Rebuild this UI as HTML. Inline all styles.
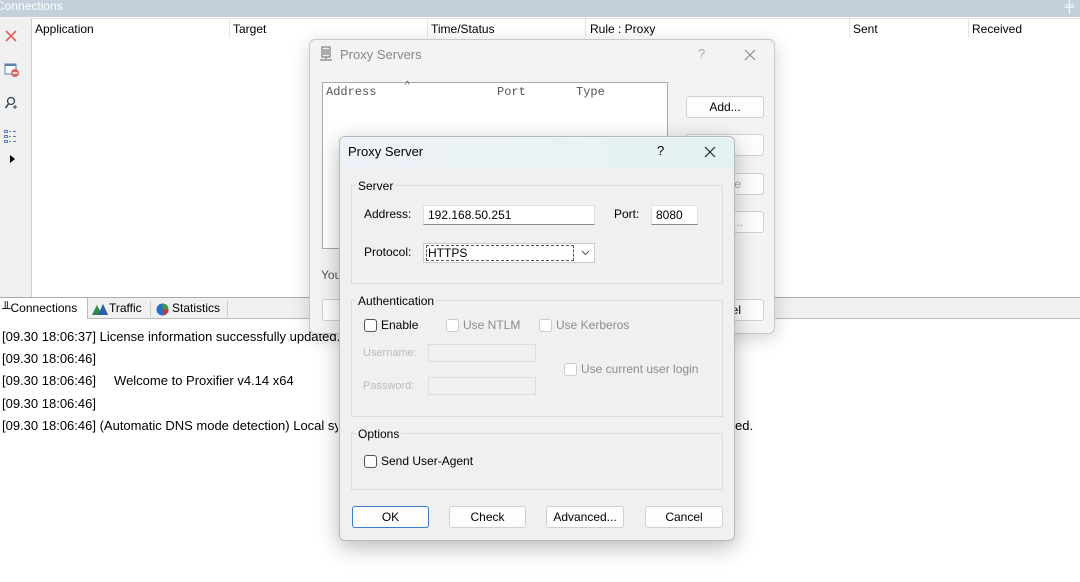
<!DOCTYPE html>
<html><head><meta charset="utf-8"><style>
*{box-sizing:border-box;margin:0;padding:0}
body{width:1080px;height:582px;overflow:hidden;background:#fff;font-family:"Segoe UI","Liberation Sans",sans-serif;font-size:12px;color:#000;position:relative}
.a{position:absolute}
.tb{left:0;top:0;width:1080px;height:17px;background:#c3d0dc;color:#fff;font-size:12px;line-height:12px;padding-left:0}
.lt{left:0;top:17px;width:31px;height:280px;background:#f0f0f0}
.grid{left:31px;top:18px;width:1049px;height:279px;background:#fff;border-left:1px solid #ccc;border-top:1px solid #ddd}
.hd{top:22px;font-size:12px}
.sep{top:19px;width:1px;height:19px;background:#e5e5e5}
.tabs{left:0;top:297px;width:1080px;height:22px;background:#f0f0f0;border-top:1px solid #aaa;border-bottom:1px solid #bbb}
.log{font-size:13px;left:2px;white-space:nowrap}
.dlg1{left:309px;top:39px;width:466px;height:295px;background:#f3f3f3;border:1px solid #c8c8c8;border-radius:6px;box-shadow:0 4px 18px rgba(0,0,0,.18)}
.dlg2{left:339px;top:136px;width:396px;height:405px;background:#f0f0f0;border:1px solid #b8b8b8;border-radius:6px;box-shadow:0 6px 22px rgba(0,0,0,.28);overflow:hidden}
.t2{left:0;top:0;width:100%;height:31px;background:linear-gradient(90deg,#eef2f8,#e4f3f1)}
.grp{border:1px solid #dcdcdc;}
.gl{background:#f0f0f0;padding:0 2px;font-size:12px}
.inp{background:#fff;border:1px solid #e2e2e2;border-bottom:1px solid #888;height:20px;font-size:12px;padding:2px 4px}
.cb{width:13px;height:13px;border:1px solid #555;border-radius:3px;background:#fff}
.cbd{border-color:#ccc}
.dis{color:#8c8c8c}
.btn{height:22px;background:#fdfdfd;border:1px solid #d0d0d0;border-radius:3px;text-align:center;line-height:20px;font-size:12px}
</style></head><body>
<div class="a tb"><span style="position:absolute;left:-4px;top:0">Connections</span><span style="position:absolute;right:6px;top:0;font-size:13px">╪</span></div>
<div class="a lt">
<svg class="a" style="left:4px;top:12px" width="14" height="14"><path d="M2 2L12 12M12 2L2 12" stroke="#e06060" stroke-width="1.6"/></svg>
<svg class="a" style="left:4px;top:45px" width="16" height="16"><rect x="1" y="2" width="11" height="10" fill="#fff" stroke="#5a7fb0"/><rect x="1" y="2" width="11" height="2" fill="#5a7fb0"/><circle cx="11" cy="11" r="4" fill="#e06060"/><rect x="8.5" y="10.3" width="5" height="1.5" fill="#fff"/></svg>
<svg class="a" style="left:4px;top:79px" width="14" height="14"><circle cx="7" cy="5" r="3.5" fill="none" stroke="#345" stroke-width="1.3"/><path d="M4.5 8L1.5 12" stroke="#345" stroke-width="1.5"/><path d="M9 11h4M11 9v4" stroke="#345"/></svg>
<svg class="a" style="left:3px;top:112px" width="16" height="16"><g fill="none" stroke="#5a7fb0"><rect x="1.5" y="1.5" width="3" height="2"/><rect x="1.5" y="6.5" width="3" height="2"/><rect x="1.5" y="11.5" width="3" height="2"/></g><path d="M6 2.5h2M10 2.5h3M6 7.5h2M10 7.5h3M6 12.5h2M10 12.5h3" stroke="#5a7fb0"/></svg>
<svg class="a" style="left:9px;top:137px" width="8" height="10"><path d="M1 1L6 5L1 9Z" fill="#000"/></svg>
</div>
<div class="a grid"></div>
<div class="a hd" style="left:35px">Application</div><div class="a sep" style="left:229px"></div>
<div class="a hd" style="left:233px">Target</div><div class="a sep" style="left:427px"></div>
<div class="a hd" style="left:431px">Time/Status</div><div class="a sep" style="left:585px"></div>
<div class="a hd" style="left:590px">Rule : Proxy</div><div class="a sep" style="left:849px"></div>
<div class="a hd" style="left:853px">Sent</div><div class="a sep" style="left:968px"></div>
<div class="a hd" style="left:972px">Received</div>
<div class="a tabs">
<div class="a" style="left:0;top:0;width:88px;height:21px;background:#fff;border-right:1px solid #bbb"></div>
<div class="a" style="left:2px;top:3px">╨Connections</div>
<svg class="a" style="left:92px;top:5px" width="16" height="12"><path d="M0 12L5 2L8 8L11 1L16 12Z" fill="#2a8a4a"/><path d="M6 12L11 1L16 12Z" fill="#2b5fa8"/></svg>
<div class="a" style="left:109px;top:3px">Traffic</div><div class="a" style="left:150px;top:3px;width:1px;height:16px;background:#ccc"></div>
<svg class="a" style="left:156px;top:5px" width="13" height="13"><circle cx="6.5" cy="6.5" r="6" fill="#2b6cc4"/><path d="M6.5 6.5V0.5A6 6 0 0 1 12.5 6.5Z" fill="#3a9a3a"/><path d="M6.5 6.5H12.5A6 6 0 0 1 8 12.3Z" fill="#c33"/></svg>
<div class="a" style="left:172px;top:3px">Statistics</div><div class="a" style="left:227px;top:3px;width:1px;height:16px;background:#ccc"></div>
</div>
<div class="a log" style="top:329px">[09.30 18:06:37] License information successfully updated.</div>
<div class="a log" style="top:351px">[09.30 18:06:46]</div>
<div class="a log" style="top:373px">[09.30 18:06:46]&nbsp;&nbsp;&nbsp;&nbsp; Welcome to Proxifier v4.14 x64</div>
<div class="a log" style="top:396px">[09.30 18:06:46]</div>
<div class="a log" style="top:418px;width:336px;overflow:hidden">[09.30 18:06:46] (Automatic DNS mode detection) Local system supports name resolution through proxy, remote DNS resolution enabled.</div>
<div class="a log" style="top:418px;left:735px">ed.</div>

<div class="a dlg1">
<svg class="a" style="left:9px;top:6px" width="14" height="16"><rect x="3" y="1" width="8" height="10" fill="none" stroke="#666"/><path d="M4 4h6M4 6h6M4 8h6M7 11v2M1 14h12" stroke="#666"/></svg>
<div class="a" style="left:30px;top:7px;font-size:13px;color:#888">Proxy Servers</div>
<div class="a" style="left:388px;top:6px;font-size:13px;color:#aaa">?</div>
<svg class="a" style="left:434px;top:9px" width="12" height="12"><path d="M1 1L11 11M11 1L1 11" stroke="#888" stroke-width="1.1"/></svg>
<div class="a" style="left:12px;top:42px;width:346px;height:167px;background:#fff;border:1px solid #aaa"></div>
<div class="a" style="left:16px;top:45px;font-family:'Liberation Mono',monospace;font-size:12px;color:#555">Address</div>
<div class="a" style="left:95px;top:40px;font-size:10px;color:#555">^</div>
<div class="a" style="left:187px;top:45px;font-family:'Liberation Mono',monospace;font-size:12px;color:#555">Port</div>
<div class="a" style="left:266px;top:45px;font-family:'Liberation Mono',monospace;font-size:12px;color:#555">Type</div>
<div class="a btn" style="left:376px;top:56px;width:78px">Add...</div>
<div class="a btn" style="left:376px;top:94px;width:78px;color:#aaa">.</div>
<div class="a btn" style="left:376px;top:133px;width:78px;color:#aaa;text-align:right;padding-right:22px">ve</div>
<div class="a btn" style="left:376px;top:171px;width:78px;color:#aaa;text-align:right;padding-right:20px">...</div>
<div class="a" style="left:11px;top:228px;font-size:12px;color:#555">You</div>
<div class="a btn" style="left:12px;top:259px;width:40px"></div>
<div class="a btn" style="left:376px;top:259px;width:78px;text-align:right;padding-right:22px">el</div>
</div>

<div class="a dlg2">
<div class="a t2"></div>
<div class="a" style="left:8px;top:7px;font-size:13px">Proxy Server</div>
<div class="a" style="left:317px;top:6px;font-size:13px">?</div>
<svg class="a" style="left:364px;top:9px" width="12" height="12"><path d="M1 1L11 11M11 1L1 11" stroke="#222" stroke-width="1.2"/></svg>

<div class="a grp" style="left:11px;top:48px;width:372px;height:99px"></div>
<div class="a gl" style="left:16px;top:42px">Server</div>
<div class="a" style="left:24px;top:70px">Address:</div>
<div class="a inp" style="left:83px;top:68px;width:172px">192.168.50.251</div>
<div class="a" style="left:274px;top:70px">Port:</div>
<div class="a inp" style="left:311px;top:68px;width:47px">8080</div>
<div class="a" style="left:24px;top:108px">Protocol:</div>
<div class="a" style="left:83px;top:106px;width:172px;height:20px;background:#fff;border:1px solid #ccc"></div>
<div class="a" style="left:86px;top:108px;width:148px;height:16px;border:1px dashed #555;padding-left:1px;line-height:14px">HTTPS</div>
<svg class="a" style="left:241px;top:113px" width="9" height="6"><path d="M1 1L4.5 4.5L8 1" fill="none" stroke="#555"/></svg>

<div class="a grp" style="left:11px;top:163px;width:372px;height:117px"></div>
<div class="a gl" style="left:16px;top:157px">Authentication</div>
<div class="a cb" style="left:24px;top:182px"></div><div class="a" style="left:41px;top:181px">Enable</div>
<div class="a cb cbd" style="left:106px;top:182px"></div><div class="a dis" style="left:123px;top:181px">Use NTLM</div>
<div class="a cb cbd" style="left:199px;top:182px"></div><div class="a dis" style="left:216px;top:181px">Use Kerberos</div>
<div class="a" style="left:23px;top:210px;color:#bbb;font-size:11px">Username:</div>
<div class="a" style="left:88px;top:207px;width:108px;height:18px;border:1px solid #ddd"></div>
<div class="a" style="left:23px;top:243px;color:#bbb;font-size:11px">Password:</div>
<div class="a" style="left:88px;top:240px;width:108px;height:18px;border:1px solid #ddd"></div>
<div class="a cb cbd" style="left:224px;top:226px"></div><div class="a dis" style="left:241px;top:225px">Use current user login</div>

<div class="a grp" style="left:11px;top:296px;width:372px;height:57px"></div>
<div class="a gl" style="left:16px;top:290px">Options</div>
<div class="a cb" style="left:24px;top:318px"></div><div class="a" style="left:41px;top:317px">Send User-Agent</div>

<div class="a btn" style="left:12px;top:369px;width:77px;border-color:#3a7ad0">OK</div>
<div class="a btn" style="left:109px;top:369px;width:77px">Check</div>
<div class="a btn" style="left:206px;top:369px;width:78px">Advanced...</div>
<div class="a btn" style="left:305px;top:369px;width:78px">Cancel</div>
</div>
</body></html>
